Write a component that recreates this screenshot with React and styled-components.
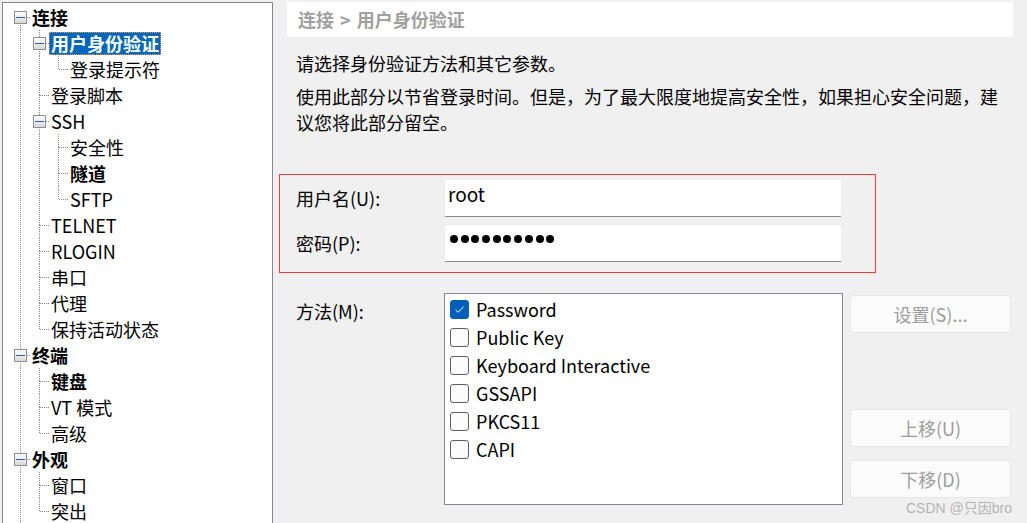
import React from "react";
import styled, { createGlobalStyle } from "styled-components";

const GlobalStyle = createGlobalStyle`
  html, body {
    margin: 0;
    padding: 0;
    background: #f0f0f0;
    overflow: hidden;
  }
  body {
    font-family: "Noto Sans CJK SC", "Noto Sans", sans-serif;
    color: #000;
  }
`;

const Window = styled.div`
  position: relative;
  display: flex;
  align-items: flex-start;
  width: 1027px;
  height: 523px;
  overflow: hidden;
`;

/* ---------- tree ---------- */

const TreePanel = styled.div`
  box-sizing: border-box;
  margin: 2px 0 0 2px;
  width: 271px;
  height: 580px;
  padding: 1px 0 0 8px;
  border: 1px solid #828790;
  background: #fff;
  overflow: hidden;
`;

const Row = styled.div`
  display: flex;
  align-items: center;
  height: 26px;
`;

const Cell = styled.svg`
  flex: none;
  display: block;
  width: 19px;
  height: 26px;
`;

const Label = styled.span`
  padding: 0 2px;
  font-size: 18px;
  line-height: 23px;
  white-space: nowrap;
  font-weight: ${(p) => (p.$bold ? 700 : 400)};
  color: ${(p) => (p.$selected ? "#fff" : "#000")};
  background: ${(p) => (p.$selected ? "#0067c0" : "transparent")};
  outline: ${(p) => (p.$selected ? "1px dotted #ff9a3c" : "none")};
  outline-offset: -1px;
`;

const dot = { stroke: "#8a8a8a", strokeWidth: 1, strokeDasharray: "1 1", shapeRendering: "crispEdges" };

function Guide({ line }) {
  return (
    <Cell viewBox="0 0 19 26">
      {line && <line x1="9.5" y1="0" x2="9.5" y2="26" style={dot} />}
    </Cell>
  );
}

function Joint({ top, bottom, expander }) {
  return (
    <Cell viewBox="0 0 19 26">
      <defs>
        <linearGradient id="exp" x1="0" y1="0" x2="0" y2="1">
          <stop offset="0" stopColor="#ffffff" />
          <stop offset="1" stopColor="#d6d6d6" />
        </linearGradient>
      </defs>
      {top && <line x1="9.5" y1="0" x2="9.5" y2="13" style={dot} />}
      {bottom && <line x1="9.5" y1="13" x2="9.5" y2="26" style={dot} />}
      <line x1="10" y1="13.5" x2="19" y2="13.5" style={dot} />
      {expander && (
        <g shapeRendering="crispEdges">
          <rect x="3.5" y="7.5" width="12" height="12" rx="1" fill="url(#exp)" stroke="#8f8f8f" />
          <line x1="5" y1="13.5" x2="14" y2="13.5" stroke="#3c5cae" />
        </g>
      )}
    </Cell>
  );
}

const tree = [
  {
    label: "连接",
    bold: true,
    children: [
      { label: "用户身份验证", bold: true, selected: true, children: [{ label: "登录提示符" }] },
      { label: "登录脚本" },
      { label: "SSH", children: [{ label: "安全性" }, { label: "隧道", bold: true }, { label: "SFTP" }] },
      { label: "TELNET" },
      { label: "RLOGIN" },
      { label: "串口" },
      { label: "代理" },
      { label: "保持活动状态" },
    ],
  },
  {
    label: "终端",
    bold: true,
    children: [{ label: "键盘", bold: true }, { label: "VT 模式" }, { label: "高级" }],
  },
  {
    label: "外观",
    bold: true,
    children: [{ label: "窗口" }, { label: "突出" }],
  },
  { label: "高级", bold: true, children: [{ label: "跟踪" }, { label: "响铃" }] },
];

function flatten(nodes, guides = [], out = [], depth = 0) {
  nodes.forEach((n, i) => {
    const last = i === nodes.length - 1;
    out.push({ ...n, guides, top: !(depth === 0 && i === 0), bottom: !last, key: out.length });
    if (n.children) flatten(n.children, [...guides, !last], out, depth + 1);
  });
  return out;
}

const rows = flatten(tree);

function Tree() {
  return (
    <TreePanel>
      {rows.map((r) => (
        <Row key={r.key}>
          {r.guides.map((g, i) => (
            <Guide key={i} line={g} />
          ))}
          <Joint top={r.top} bottom={r.bottom} expander={!!r.children} />
          <Label $bold={r.bold} $selected={r.selected}>
            {r.label}
          </Label>
        </Row>
      ))}
    </TreePanel>
  );
}

/* ---------- right side ---------- */

const Content = styled.div`
  display: flex;
  flex-direction: column;
  margin-left: 6px;
  width: 740px;
`;

const Breadcrumb = styled.div`
  margin: 2px 0 0 8px;
  width: 726px;
  height: 35px;
  padding-left: 11px;
  box-sizing: border-box;
  background: #fff;
  color: #a0a0a0;
  font-size: 18px;
  font-weight: 700;
  line-height: 35px;
  word-spacing: 2px;
`;

const Text = styled.p`
  margin: ${(p) => p.$gap}px 0 0;
  padding-left: 17px;
  width: 710px;
  font-size: 18px;
  line-height: 26px;
`;

const Credentials = styled.div`
  box-sizing: border-box;
  display: grid;
  grid-template-columns: 148px 398px;
  grid-auto-rows: 38px;
  row-gap: 7px;
  align-items: center;
  align-content: start;
  margin-top: 39px;
  width: 597px;
  height: 99px;
  padding: 4px 0 0 16px;
  border: 1px solid #f23b3b;
`;

const FieldLabel = styled.span`
  font-size: 18px;
  line-height: 26px;
`;

const Input = styled.div`
  box-sizing: border-box;
  height: 38px;
  padding: 1px 0 0 3px;
  background: #fff;
  border: 1px solid #ececec;
  border-bottom-color: #8a8a8a;
  border-radius: 2px;
  font-size: 19px;
  line-height: 26px;
`;

const Dots = styled.div`
  display: flex;
  gap: 2.7px;
  padding: 9px 0 0 2px;
`;

const Dot = styled.span`
  width: 8px;
  height: 8px;
  border-radius: 50%;
  background: #000;
`;

const Methods = styled.div`
  display: flex;
  margin-top: 20px;
  padding-left: 17px;
`;

const MethodLabel = styled(FieldLabel)`
  width: 148px;
  padding-top: 5px;
`;

const ListBox = styled.div`
  box-sizing: border-box;
  width: 399px;
  height: 212px;
  padding: 1px 0 0 5px;
  border: 1px solid #828790;
  background: #fff;
`;

const Item = styled.div`
  display: flex;
  align-items: center;
  gap: 7px;
  height: 28px;
  font-size: 18px;
`;

const Box = styled.span`
  box-sizing: border-box;
  display: flex;
  align-items: center;
  justify-content: center;
  width: 19px;
  height: 19px;
  border-radius: 3px;
  border: 1px solid ${(p) => (p.$checked ? "#005fb8" : "#5f5f5f")};
  background: ${(p) => (p.$checked ? "#005fb8" : "#fbfbfb")};
`;

const Buttons = styled.div`
  display: flex;
  flex-direction: column;
  margin-left: 7px;
`;

const Button = styled.div`
  box-sizing: border-box;
  width: 161px;
  height: 38px;
  margin-top: ${(p) => p.$gap}px;
  border: 1px solid #e6e6e6;
  border-radius: 4px;
  background: #fbfbfb;
  color: #9d9d9d;
  font-size: 18px;
  line-height: 36px;
  text-align: center;
`;

const Watermark = styled.div`
  position: absolute;
  right: 15px;
  bottom: 6px;
  font-family: "Liberation Sans", "Noto Sans CJK SC", sans-serif;
  font-size: 14px;
  color: #b4b4b4;
`;

const methods = [
  { name: "Password", checked: true },
  { name: "Public Key" },
  { name: "Keyboard Interactive" },
  { name: "GSSAPI" },
  { name: "PKCS11" },
  { name: "CAPI" },
];

function Check({ checked }) {
  return (
    <Box $checked={checked}>
      {checked && (
        <svg width="11" height="9" viewBox="0 0 11 9">
          <path d="M1.5 4.8 L4.2 7.3 L9.6 1.6" fill="none" stroke="#fff" strokeWidth="1" />
        </svg>
      )}
    </Box>
  );
}

export default function App() {
  return (
    <Window>
      <GlobalStyle />
      <Tree />
      <Content>
        <Breadcrumb>连接 &gt; 用户身份验证</Breadcrumb>
        <Text $gap={13}>请选择身份验证方法和其它参数。</Text>
        <Text $gap={7}>
          使用此部分以节省登录时间。但是，为了最大限度地提高安全性，如果担心安全问题，建议您将此部分留空。
        </Text>
        <Credentials>
          <FieldLabel>用户名(U):</FieldLabel>
          <Input>root</Input>
          <FieldLabel>密码(P):</FieldLabel>
          <Input>
            <Dots>
              {Array.from({ length: 10 }, (_, i) => (
                <Dot key={i} />
              ))}
            </Dots>
          </Input>
        </Credentials>
        <Methods>
          <MethodLabel>方法(M):</MethodLabel>
          <ListBox>
            {methods.map((m) => (
              <Item key={m.name}>
                <Check checked={m.checked} />
                {m.name}
              </Item>
            ))}
          </ListBox>
          <Buttons>
            <Button $gap={2}>设置(S)...</Button>
            <Button $gap={76}>上移(U)</Button>
            <Button $gap={13}>下移(D)</Button>
          </Buttons>
        </Methods>
      </Content>
      <Watermark>CSDN @只因bro</Watermark>
    </Window>
  );
}
